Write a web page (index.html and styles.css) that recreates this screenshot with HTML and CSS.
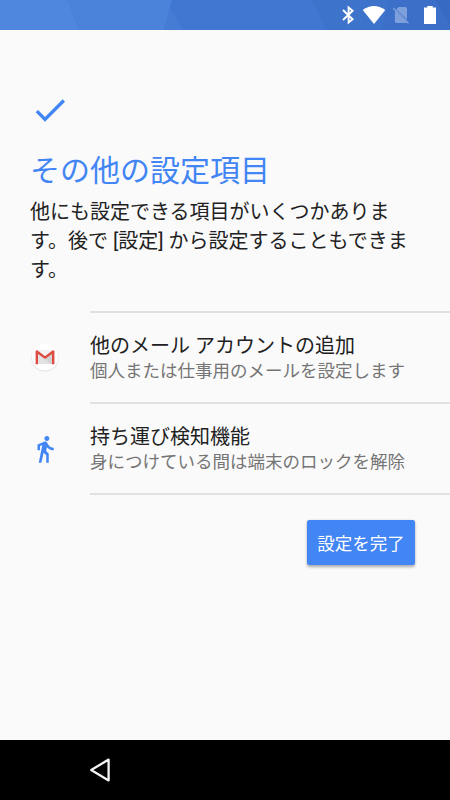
FILE: index.html
```
<!DOCTYPE html>
<html lang="ja">
<head>
<meta charset="utf-8">
<title>その他の設定項目</title>
<link rel="stylesheet" href="styles.css">
</head>
<body>
<div class="screen">
  <header class="status-bar">
    <svg width="450" height="30" viewBox="0 0 450 30">
      <path fill="#4f87df" d="M0 0H68L79 30H0z"/>
      <path fill="#4b82da" d="M68 0H172L164 30H79z"/>
      <path fill="#467cd4" d="M172 0L170 8L184 30H164z"/>
      <path fill="#4177d0" d="M172 0H312L326 30H184L170 8z"/>
      <path fill="#3e73cc" d="M312 0H390L381 30H326z"/>
      <path fill="#3c70c8" d="M390 0H450V30H381z"/>
      <path fill="#376ac2" d="M435 0H450V24z"/>
      <path fill="none" stroke="#fff" stroke-width="1.9" d="M343 10L352.6 19.2L348.6 22.5V7.5L352.6 10.8L343 20"/>
      <path fill="#fff" d="M362.7 10Q374 1.8 385.3 10L374 24z"/>
      <path fill="#7d9fdc" d="M398.8 7H405.2Q407 7 407 8.8V19.7L396 9.2zM395 10.7L407 22.1Q406.5 23 405.2 23H396.5Q394.8 23 394.8 21.3z"/>
      <path fill="none" stroke="#7d9fdc" stroke-width="1.5" d="M393.3 8.2L408.5 23.3"/>
      <path fill="#fff" d="M427.3 6H432.7V7.5H436V24H424V7.5H427.3z"/>
    </svg>
  </header>
  <main class="content">
    <section class="intro">
      <svg class="check" width="40" height="40" viewBox="0 0 24 24"><path fill="#4285f4" d="M9 16.17L4.83 12l-1.42 1.41L9 19 21 7l-1.41-1.41z"/></svg>
      <h1 class="title">その他の設定項目</h1>
      <p class="description">他にも設定できる項目がいくつかあります。後で [設定] から設定することもできます。</p>
    </section>
    <ul class="options">
      <li class="option">
        <svg class="option-icon" width="30" height="30" viewBox="0 0 30 30">
          <circle cx="15" cy="16" r="13.9" fill="#ededed"/>
          <circle cx="15" cy="15.8" r="13.4" fill="#dcdcdc"/>
          <circle cx="15" cy="15.2" r="13.4" fill="#fff"/>
          <path fill="#e2e2e2" d="M7 8.5H23V22H7z"/>
          <path fill="#f2f2f2" d="M7 8.5H23L15 14.8z"/>
          <path fill="#d2d2d2" d="M15 16.5L23 11V22H20.5z"/>
          <path fill="none" stroke="#de4b40" stroke-width="2.4" stroke-linejoin="round" d="M6.8 22.2V9.5L15 15.6L23.2 9.5V22.2"/>
        </svg>
        <div class="option-text">
          <div class="option-title">他のメール アカウントの追加</div>
          <div class="option-summary">個人または仕事用のメールを設定します</div>
        </div>
      </li>
      <li class="option">
        <svg class="option-icon" width="30" height="30" viewBox="0 0 24 24"><path fill="#4285f4" d="M13.5 5.5c1.1 0 2-.9 2-2s-.9-2-2-2-2 .9-2 2 .9 2 2 2zM9.8 8.9L7 23h2.1l1.8-8 2.1 2v6h2v-7.5l-2.1-2 .6-3C14.8 12 16.8 13 19 13v-2c-1.9 0-3.5-1-4.3-2.4l-1-1.6c-.4-.6-1-1-1.7-1-.3 0-.5.1-.8.1L6 8.3V13h2V9.6l1.8-.7"/></svg>
        <div class="option-text">
          <div class="option-title">持ち運び検知機能</div>
          <div class="option-summary">身につけている間は端末のロックを解除</div>
        </div>
      </li>
    </ul>
    <div class="actions"><button class="finish" type="button">設定を完了</button></div>
  </main>
  <nav class="nav-bar">
    <svg width="24" height="26" viewBox="0 0 24 26"><path fill="none" stroke="#f2f2f2" stroke-width="2.3" stroke-linejoin="round" d="M3.2 13L20.6 2.6V23.4z"/></svg>
  </nav>
</div>
</body>
</html>
```
FILE: styles.css
```
* {
  box-sizing: border-box;
}

body {
  margin: 0;
  background: #fafafa;
  color: #212121;
  font-family: Roboto, "Noto Sans CJK JP", sans-serif;
}

.screen {
  display: flex;
  flex-direction: column;
  width: 450px;
  height: 800px;
  overflow: hidden;
}

.status-bar {
  height: 30px;
  background: #4177d0;
}

svg {
  display: block;
  flex: none;
}

.content {
  flex: 1;
}

.intro {
  padding: 60px 30px 0;
}

.title {
  margin: 19px 0 0;
  color: #4285f4;
  font-size: 30px;
  font-weight: 400;
  line-height: 44px;
}

.description {
  margin: 5px 0 0;
  font-size: 20px;
  line-height: 29px;
}

.options {
  margin: 26px 0 0;
  padding: 0;
  list-style: none;
}

.option {
  display: flex;
  align-items: center;
  height: 91px;
  padding-left: 30px;
}

.option-text {
  flex: 1;
  height: 91px;
  margin-left: 30px;
  padding-top: 19px;
  border-top: 2px solid #e1e1e1;
  white-space: nowrap;
}

.option:last-child,
.option:last-child .option-text {
  height: 93px;
}

.option:last-child .option-text {
  border-bottom: 2px solid #e1e1e1;
}

.option-title {
  font-size: 20px;
  line-height: 29px;
}

.option-summary {
  margin-top: -2px;
  color: #757575;
  font-size: 17.5px;
  line-height: 24px;
}

.actions {
  display: flex;
  justify-content: flex-end;
  padding: 25px 35px 0;
}

.finish {
  width: 108px;
  height: 45px;
  padding: 0;
  border: 0;
  border-radius: 2.5px;
  background: #4285f4;
  box-shadow: 0 1.5px 3px rgba(0, 0, 0, .32);
  color: #fff;
  font: inherit;
  font-size: 17.5px;
}

.nav-bar {
  display: flex;
  align-items: center;
  height: 60px;
  padding-left: 88px;
  background: #000;
}
```
